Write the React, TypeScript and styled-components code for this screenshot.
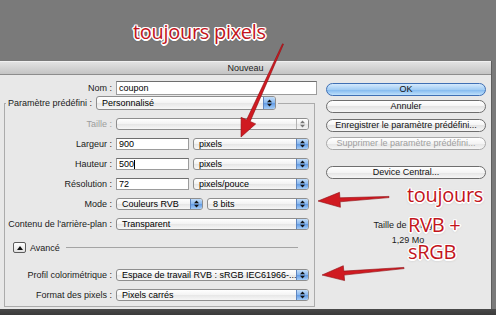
import styled, { createGlobalStyle } from "styled-components";

const GlobalStyle = createGlobalStyle`
  html, body {
    margin: 0;
    padding: 0;
    background: #7a7a7a;
  }
  * {
    box-sizing: border-box;
  }
`;

const Screen = styled.div`
  position: relative;
  width: 496px;
  height: 315px;
  overflow: hidden;
  padding-top: 61px;
  background: #7a7a7a;
  font-family: "Liberation Sans", Arial, sans-serif;
  font-size: 9px;
  color: #1a1a1a;
`;

const Dialog = styled.div`
  display: flex;
  flex-direction: column;
  width: 492px;
  height: 248px;
  background: #e8e8e8;
  border-right: 1px solid #5e5e5e;
`;

const Shade = styled.div`
  height: 6px;
  background: linear-gradient(#4a4a4a, #3a3a3a);
`;

const TitleBar = styled.div`
  height: 14px;
  line-height: 13px;
  text-align: center;
  color: #222;
  background: linear-gradient(#e2e2e2, #c4c4c4);
  border-top: 1px solid #f0f0f0;
  border-bottom: 1px solid #8c8c8c;
`;

const Body = styled.div`
  display: flex;
  flex: 1;
`;

const Main = styled.div`
  width: 318px;
  padding-top: 6px;
`;

const Side = styled.div`
  display: flex;
  flex-direction: column;
  width: 160px;
  margin-left: 8px;
  padding-top: 8px;
`;

const Row = styled.div<{ $label: number; $h?: number }>`
  display: grid;
  grid-template-columns: ${(p) => p.$label}px auto;
  column-gap: 4px;
  align-items: center;
  height: ${(p) => p.$h ?? 12}px;
`;

const Label = styled.span<{ $disabled?: boolean }>`
  text-align: right;
  white-space: nowrap;
  color: ${(p) => (p.$disabled ? "#9c9c9c" : "#1a1a1a")};
`;

const Controls = styled.div`
  display: flex;
  gap: 4px;
  height: 100%;
`;

const TextField = styled.div<{ $w: number }>`
  display: flex;
  align-items: center;
  width: ${(p) => p.$w}px;
  height: 100%;
  padding-left: 2px;
  background: #fff;
  border: 1px solid #9c9c9c;
  border-top-color: #6e6e6e;
  color: #000;
`;

const Caret = styled.span`
  width: 1px;
  height: 9px;
  background: #000;
`;

const PopBox = styled.div<{ $w: number }>`
  display: flex;
  width: ${(p) => p.$w}px;
  height: 100%;
  border: 1px solid #8e8e8e;
  border-radius: 3px;
  overflow: hidden;
  background: linear-gradient(#ffffff, #f3f3f3 50%, #e6e6e6 50%, #f7f7f7);
`;

const PopValue = styled.span`
  flex: 1;
  display: flex;
  align-items: center;
  padding-left: 5px;
  color: #000;
  white-space: nowrap;
  overflow: hidden;
`;

const Stepper = styled.span<{ $disabled?: boolean }>`
  display: flex;
  align-items: center;
  justify-content: center;
  width: 12px;
  border-left: 1px solid ${(p) => (p.$disabled ? "#b4b4b4" : "#5f86c0")};
  background: ${(p) =>
    p.$disabled
      ? "linear-gradient(#ffffff, #f1f1f1 50%, #e4e4e4 50%, #f4f4f4)"
      : "linear-gradient(#c3ddf8, #86b6ee 50%, #5f99e4 50%, #a6cdf6)"};
`;

const Group = styled.fieldset`
  width: 311px;
  margin: 1px 0 0 4px;
  padding: 0 5px 5px 0;
  border: 1px solid #ababab;
`;

const Legend = styled.legend`
  margin-left: 1px;
  padding: 0 2px;
`;

const LegendRow = styled.div`
  display: flex;
  align-items: center;
  gap: 4px;
  height: 14px;
`;

const Rows = styled.div<{ $top: number }>`
  display: flex;
  flex-direction: column;
  gap: 8px;
  margin-top: ${(p) => p.$top}px;
`;

const Advanced = styled.div`
  display: flex;
  align-items: center;
  gap: 4px;
  height: 11px;
  margin: 12px 11px 0 8px;
`;

const Disclosure = styled.span`
  display: flex;
  align-items: center;
  justify-content: center;
  width: 13px;
  height: 11px;
  border: 1px solid #5c5c5c;
  border-radius: 2px;
  background: linear-gradient(#ffffff, #e0e0e0);
`;

const Rule = styled.span`
  flex: 1;
  height: 1px;
  margin-left: 2px;
  background: #a4a4a4;
`;

const PushButton = styled.div<{ $default?: boolean; $disabled?: boolean; $gap: number }>`
  height: 13px;
  margin-top: ${(p) => p.$gap}px;
  line-height: 11px;
  text-align: center;
  white-space: nowrap;
  border-radius: 7px;
  border: 1px solid ${(p) => (p.$default ? "#3f6fb4" : p.$disabled ? "#a8a8a8" : "#6e6e6e")};
  color: ${(p) => (p.$disabled ? "#a0a0a0" : "#111")};
  background: ${(p) =>
    p.$default
      ? "linear-gradient(#d4e9fc, #a3cdf4 50%, #7db6ee 50%, #bfe0fb)"
      : "linear-gradient(#ffffff, #f4f4f4 50%, #e4e4e4 50%, #f6f6f6)"};
`;

const SizeInfo = styled.div`
  display: flex;
  flex-direction: column;
  align-items: center;
  gap: 6px;
  margin-top: 42px;
  padding-left: 4px;
  line-height: 9px;
`;

const Overlay = styled.svg`
  position: absolute;
  top: 0;
  left: 0;
  pointer-events: none;
`;

const Note = styled.span<{ $x: number; $y: number }>`
  position: absolute;
  left: ${(p) => p.$x}px;
  top: ${(p) => p.$y}px;
  font-family: "Open Sans", "Noto Sans", sans-serif;
  font-size: 20px;
  line-height: 20px;
  letter-spacing: -0.3px;
  white-space: nowrap;
  color: #c3151c;
  text-shadow: -1.5px 0 #fff, 1.5px 0 #fff, 0 -1.5px #fff, 0 1.5px #fff,
    -1px -1px #fff, 1px -1px #fff, -1px 1px #fff, 1px 1px #fff,
    0 1px 3px rgba(0, 0, 0, 0.35);
`;

const StepIcon = ({ disabled }: { disabled?: boolean }) => (
  <svg width="5" height="8" viewBox="0 0 5 8">
    <polygon points="0,3.2 2.5,0.6 5,3.2" fill={disabled ? "#777" : "#111"} />
    <polygon points="0,4.8 2.5,7.4 5,4.8" fill={disabled ? "#777" : "#111"} />
  </svg>
);

const PopUp = ({ w, value, disabled }: { w: number; value: string; disabled?: boolean }) => (
  <PopBox $w={w}>
    <PopValue>{value}</PopValue>
    <Stepper $disabled={disabled}>
      <StepIcon disabled={disabled} />
    </Stepper>
  </PopBox>
);

type Pt = [number, number];

// tapered shaft + triangular head, tail -> tip
const arrowPoints = (tail: Pt, tip: Pt, headLen: number, headHalf: number, shaftTail: number, shaftHead: number) => {
  const dx = tip[0] - tail[0];
  const dy = tip[1] - tail[1];
  const len = Math.hypot(dx, dy);
  const ux = dx / len;
  const uy = dy / len;
  const nx = -uy;
  const ny = ux;
  const bx = tip[0] - ux * headLen;
  const by = tip[1] - uy * headLen;
  const pts: Pt[] = [
    [tail[0] + (nx * shaftTail) / 2, tail[1] + (ny * shaftTail) / 2],
    [bx + (nx * shaftHead) / 2, by + (ny * shaftHead) / 2],
    [bx + nx * headHalf, by + ny * headHalf],
    tip,
    [bx - nx * headHalf, by - ny * headHalf],
    [bx - (nx * shaftHead) / 2, by - (ny * shaftHead) / 2],
    [tail[0] - (nx * shaftTail) / 2, tail[1] - (ny * shaftTail) / 2],
  ];
  return pts.map((p) => `${p[0].toFixed(1)},${p[1].toFixed(1)}`).join(" ");
};

const arrows: { tail: Pt; tip: Pt; head: number; half: number }[] = [
  { tail: [283, 44], tip: [241, 137], head: 18, half: 8 },
  { tail: [389, 197], tip: [318, 201], head: 22, half: 7.5 },
  { tail: [404, 268], tip: [322, 275], head: 22, half: 7.5 },
];

export default function App() {
  return (
    <Screen>
      <GlobalStyle />
      <Dialog>
        <TitleBar>Nouveau</TitleBar>
        <Body>
          <Main>
            <Row $label={112} $h={14}>
              <Label>Nom :</Label>
              <TextField $w={201}>coupon</TextField>
            </Row>
            <Group>
              <Legend>
                <LegendRow>
                  <Label>Paramètre prédéfini :</Label>
                  <Controls>
                    <PopUp w={180} value="Personnalisé" />
                  </Controls>
                </LegendRow>
              </Legend>
              <Rows $top={8}>
                <Row $label={107}>
                  <Label $disabled>Taille :</Label>
                  <Controls>
                    <PopUp w={193} value="" disabled />
                  </Controls>
                </Row>
                <Row $label={107}>
                  <Label>Largeur :</Label>
                  <Controls>
                    <TextField $w={73}>900</TextField>
                    <PopUp w={116} value="pixels" />
                  </Controls>
                </Row>
                <Row $label={107}>
                  <Label>Hauteur :</Label>
                  <Controls>
                    <TextField $w={73}>
                      500
                      <Caret />
                    </TextField>
                    <PopUp w={116} value="pixels" />
                  </Controls>
                </Row>
                <Row $label={107}>
                  <Label>Résolution :</Label>
                  <Controls>
                    <TextField $w={73}>72</TextField>
                    <PopUp w={116} value="pixels/pouce" />
                  </Controls>
                </Row>
                <Row $label={107}>
                  <Label>Mode :</Label>
                  <Controls>
                    <PopUp w={87} value="Couleurs RVB" />
                    <PopUp w={102} value="8 bits" />
                  </Controls>
                </Row>
                <Row $label={107}>
                  <Label>Contenu de l'arrière-plan :</Label>
                  <Controls>
                    <PopUp w={193} value="Transparent" />
                  </Controls>
                </Row>
              </Rows>
              <Advanced>
                <Disclosure>
                  <svg width="6" height="4" viewBox="0 0 6 4">
                    <polygon points="0,4 3,0 6,4" fill="#111" />
                  </svg>
                </Disclosure>
                <span>Avancé</span>
                <Rule />
              </Advanced>
              <Rows $top={16}>
                <Row $label={107}>
                  <Label>Profil colorimétrique :</Label>
                  <Controls>
                    <PopUp w={193} value="Espace de travail RVB : sRGB IEC61966-..." />
                  </Controls>
                </Row>
                <Row $label={107}>
                  <Label>Format des pixels :</Label>
                  <Controls>
                    <PopUp w={193} value="Pixels carrés" />
                  </Controls>
                </Row>
              </Rows>
            </Group>
          </Main>
          <Side>
            <PushButton $default $gap={0}>OK</PushButton>
            <PushButton $gap={4}>Annuler</PushButton>
            <PushButton $gap={6}>Enregistrer le paramètre prédéfini...</PushButton>
            <PushButton $disabled $gap={5}>Supprimer le paramètre prédéfini...</PushButton>
            <PushButton $gap={16}>Device Central...</PushButton>
            <SizeInfo>
              <span>Taille de l'image :</span>
              <span>1,29 Mo</span>
            </SizeInfo>
          </Side>
        </Body>
      </Dialog>
      <Shade />
      <Overlay width="496" height="315" viewBox="0 0 496 315">
        {arrows.map((a, i) => (
          <polygon
            key={i}
            points={arrowPoints(a.tail, a.tip, a.head, a.half, 1.2, 4)}
            fill="#d01a21"
            stroke="#8e0e13"
            strokeWidth="0.6"
            strokeLinejoin="round"
          />
        ))}
      </Overlay>
      <Note $x={133} $y={22}>toujours pixels</Note>
      <Note $x={407} $y={185}>toujours</Note>
      <Note $x={408} $y={215}>RVB +</Note>
      <Note $x={408} $y={242}>sRGB</Note>
    </Screen>
  );
}
